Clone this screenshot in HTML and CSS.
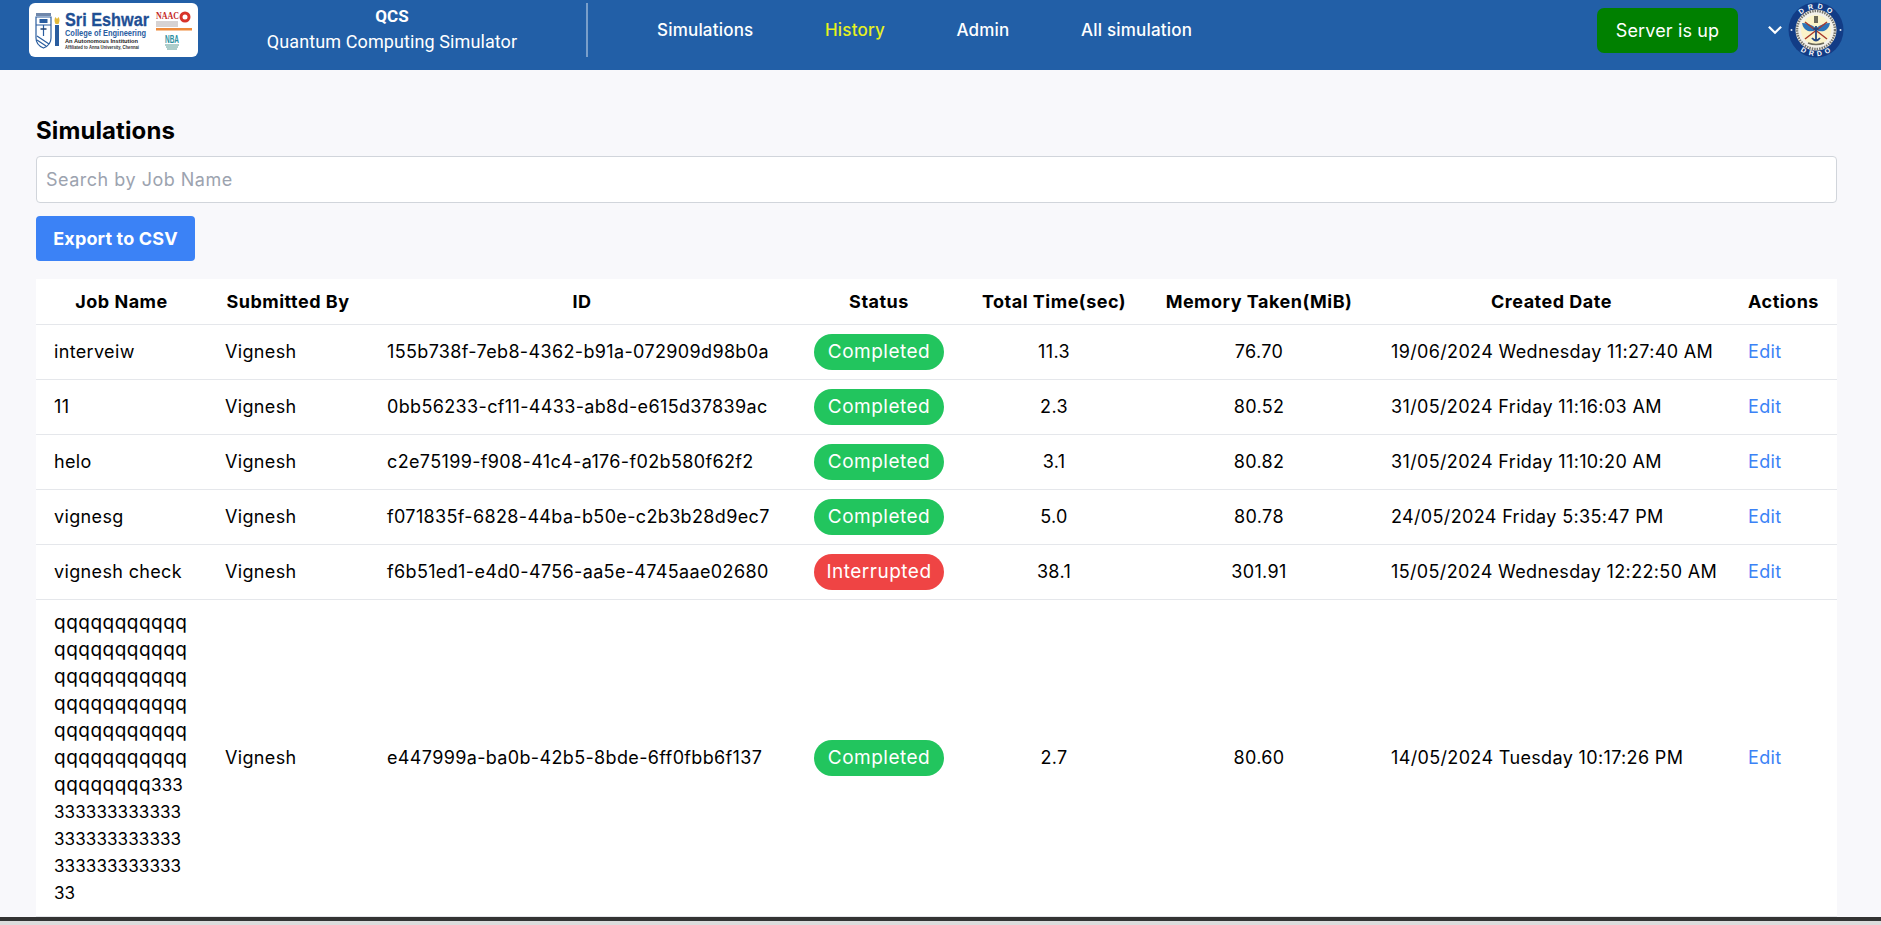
FILE: index.html
```html
<!DOCTYPE html>
<html lang="en">

<head>
    <meta charset="UTF-8">
    <meta name="viewport" content="width=device-width, initial-scale=1.0">
    <title>QCS - Quantum Computing Simulator</title>
    <link rel="stylesheet" href="styles.css">
</head>

<body>
    <header class="topbar">
        <!-- College logo -->
        <svg class="logo" viewBox="0 0 169 54" role="img" aria-label="Sri Eshwar College of Engineering">
            <rect width="169" height="54" rx="6" fill="#fff" />
            <rect x="7" y="10" width="15" height="3" fill="#6f87ab" />
            <path d="M7 14h15v21q0 7-7.500 10q-7.500-3-7.500-10z" fill="#fff" stroke="#2a5d9f" stroke-width="1.200" />
            <path d="M7 22h15M8 33l12 8M8 37l9 6M14.500 22v11" fill="none" stroke="#2a5d9f" stroke-width="1.200" />
            <path d="M10.500 16h8v4h-8z" fill="#2a5d9f" />
            <path d="M11.500 26h6" stroke="#20406f" stroke-width="1.500" />
            <path d="M26.500 14q-2 3 0 7h3q2-4 0-7l-1.500 2z" fill="#e3b93a" />
            <path d="M26 22h4v21h-4z" fill="#2a5d9f" />
            <text class="logo-name" x="36" y="23" textLength="84" lengthAdjust="spacingAndGlyphs">Sri Eshwar</text>
            <text class="logo-college" x="36" y="33" textLength="81" lengthAdjust="spacingAndGlyphs">College of Engineering</text>
            <text class="logo-auto" x="36" y="40" textLength="73" lengthAdjust="spacingAndGlyphs">An Autonomous Institution</text>
            <text class="logo-aff" x="36" y="46" textLength="74" lengthAdjust="spacingAndGlyphs">Affiliated to Anna University, Chennai</text>
            <text class="logo-naac" x="127" y="16" textLength="23" lengthAdjust="spacingAndGlyphs">NAAC</text>
            <circle cx="156" cy="14" r="5.500" fill="#d8342a" />
            <circle cx="156" cy="14" r="2.500" fill="#fff" />
            <path d="M127 19h22M127 21h22M127 23h22" stroke="#9a8f8f" stroke-width=".8" />
            <rect x="127" y="25" width="36" height="2.500" fill="#ee8a3a" />
            <text class="logo-nba" x="136" y="40" textLength="14" lengthAdjust="spacingAndGlyphs">NBA</text>
            <path d="M136 42h14M137 44h12M138 46h10" stroke="#5a9a94" stroke-width="1" />
        </svg>

        <div class="brand">
            <strong>QCS</strong>
            <span>Quantum Computing Simulator</span>
        </div>

        <nav class="menu">
            <a href="#">Simulations</a>
            <a href="#" class="active">History</a>
            <a href="#">Admin</a>
            <a href="#">All simulation</a>
        </nav>

        <button class="server">Server is up</button>

        <svg class="chevron" viewBox="0 0 14 9">
            <path d="M1.500 1.500 7 7l5.500-5.500" fill="none" stroke="#fff" stroke-width="2" />
        </svg>

        <!-- DRDO emblem -->
        <svg class="drdo" viewBox="0 0 56 56" role="img" aria-label="DRDO">
            <defs>
                <path id="arcTop" d="M6.500 28a21.500 21.500 0 0 1 43 0" />
                <path id="arcBottom" d="M2 28a26 26 0 0 0 52 0" />
            </defs>
            <circle cx="28" cy="28" r="27.500" fill="#123c86" />
            <text class="drdo-text"><textPath href="#arcTop" startOffset="50%">D R D O</textPath></text>
            <text class="drdo-text"><textPath href="#arcBottom" startOffset="50%">D R D O</textPath></text>
            <circle cx="3.500" cy="28" r="1" fill="#dfe6f2" />
            <circle cx="52.500" cy="28" r="1" fill="#dfe6f2" />
            <circle cx="28" cy="28" r="20.500" fill="#f3f1ea" />
            <circle cx="28" cy="28" r="19" fill="none" stroke="#77756f" stroke-width="2.500" stroke-dasharray="1.500 1" />
            <circle cx="28" cy="28" r="15" fill="#fbf3c9" />
            <path d="M26 14h4v7h-4z" fill="#6d6a5a" />
            <path d="M28 26Q21 21 14 21q1 6 6 8q4 1 8-1q4 2 8 1q5-2 6-8q-7 0-14 5z" fill="#2d74b8" />
            <path d="M17 37 39 20M39 37 17 20" stroke="#a83a2c" stroke-width="1.500" />
            <path d="M28 24v14M24 36q4 5 8 0M25.500 27h5" fill="none" stroke="#24457f" stroke-width="1.800" />
            <path d="M20 41q8 3 16 0" fill="none" stroke="#6d6a5a" stroke-width="1.500" />
        </svg>
    </header>

    <main class="content">
        <h1>Simulations</h1>
        <input class="search" type="text" placeholder="Search by Job Name">
        <button class="export">Export to CSV</button>

        <table class="jobs">
            <colgroup>
                <col class="col-name">
                <col class="col-user">
                <col class="col-id">
                <col class="col-status">
                <col class="col-time">
                <col class="col-memory">
                <col class="col-date">
                <col class="col-actions">
            </colgroup>
            <thead>
                <tr>
                    <th>Job Name</th>
                    <th>Submitted By</th>
                    <th>ID</th>
                    <th>Status</th>
                    <th>Total Time(sec)</th>
                    <th>Memory Taken(MiB)</th>
                    <th>Created Date</th>
                    <th>Actions</th>
                </tr>
            </thead>
            <tbody>
                <tr>
                    <td>interveiw</td>
                    <td>Vignesh</td>
                    <td>155b738f-7eb8-4362-b91a-072909d98b0a</td>
                    <td class="center"><span class="pill done">Completed</span></td>
                    <td class="center">11.3</td>
                    <td class="center">76.70</td>
                    <td>19/06/2024 Wednesday 11:27:40 AM</td>
                    <td><a href="#">Edit</a></td>
                </tr>
                <tr>
                    <td>11</td>
                    <td>Vignesh</td>
                    <td>0bb56233-cf11-4433-ab8d-e615d37839ac</td>
                    <td class="center"><span class="pill done">Completed</span></td>
                    <td class="center">2.3</td>
                    <td class="center">80.52</td>
                    <td>31/05/2024 Friday 11:16:03 AM</td>
                    <td><a href="#">Edit</a></td>
                </tr>
                <tr>
                    <td>helo</td>
                    <td>Vignesh</td>
                    <td>c2e75199-f908-41c4-a176-f02b580f62f2</td>
                    <td class="center"><span class="pill done">Completed</span></td>
                    <td class="center">3.1</td>
                    <td class="center">80.82</td>
                    <td>31/05/2024 Friday 11:10:20 AM</td>
                    <td><a href="#">Edit</a></td>
                </tr>
                <tr>
                    <td>vignesg</td>
                    <td>Vignesh</td>
                    <td>f071835f-6828-44ba-b50e-c2b3b28d9ec7</td>
                    <td class="center"><span class="pill done">Completed</span></td>
                    <td class="center">5.0</td>
                    <td class="center">80.78</td>
                    <td>24/05/2024 Friday 5:35:47 PM</td>
                    <td><a href="#">Edit</a></td>
                </tr>
                <tr>
                    <td>vignesh check</td>
                    <td>Vignesh</td>
                    <td>f6b51ed1-e4d0-4756-aa5e-4745aae02680</td>
                    <td class="center"><span class="pill fail">Interrupted</span></td>
                    <td class="center">38.1</td>
                    <td class="center">301.91</td>
                    <td>15/05/2024 Wednesday 12:22:50 AM</td>
                    <td><a href="#">Edit</a></td>
                </tr>
                <tr>
                    <td class="long"><span class="long-q">qqqqqqqqqqq<br>qqqqqqqqqqq<br>qqqqqqqqqqq<br>qqqqqqqqqqq<br>qqqqqqqqqqq<br>qqqqqqqqqqq<br>qqqqqqqq</span>333<br>333333333333<br>333333333333<br>333333333333<br>33</td>
                    <td>Vignesh</td>
                    <td>e447999a-ba0b-42b5-8bde-6ff0fbb6f137</td>
                    <td class="center"><span class="pill done">Completed</span></td>
                    <td class="center">2.7</td>
                    <td class="center">80.60</td>
                    <td>14/05/2024 Tuesday 10:17:26 PM</td>
                    <td><a href="#">Edit</a></td>
                </tr>
            </tbody>
        </table>
    </main>

    <div class="window-edge"></div>
</body>

</html>
```

FILE: styles.css
```css
/* General styles */
* {
    box-sizing: border-box;
}

body {
    font-family: Inter, "Open Sans", sans-serif;
    font-size: 18px;
    letter-spacing: 0.35px;
    background-color: #f8f8fb;
    color: #000;
    margin: 0;
    height: 100vh;
    display: flex;
    flex-direction: column;
    overflow: hidden;
}

/* Top bar */
.topbar {
    flex: none;
    height: 70px;
    background-color: #225fa7;
    color: #fff;
    display: flex;
    align-items: center;
    padding: 0 0 10px 29px;
}

.logo {
    flex: none;
    width: 169px;
    height: 54px;
    letter-spacing: 0;
}

.logo text {
    font-family: "Liberation Sans", sans-serif;
}

.logo .logo-name {
    font-size: 18px;
    font-weight: 700;
    fill: #1f4f94;
    stroke: #1f4f94;
    stroke-width: 0.3px;
}

.logo .logo-college {
    font-size: 8.500px;
    font-weight: 700;
    fill: #2a5d9f;
}

.logo .logo-auto {
    font-size: 5.500px;
    font-weight: 700;
    fill: #222;
}

.logo .logo-aff {
    font-size: 4.500px;
    font-weight: 700;
    fill: #333;
}

.logo .logo-naac {
    font-family: "Liberation Serif", serif;
    font-size: 10px;
    font-weight: 700;
    fill: #c5281f;
}

.logo .logo-nba {
    font-size: 10px;
    font-weight: 700;
    fill: #2f8f9f;
}

.brand {
    flex: none;
    width: 390px;
    height: 54px;
    padding-top: 5px;
    border-right: 2px solid rgba(255, 255, 255, 0.4);
    display: flex;
    flex-direction: column;
    align-items: center;
    gap: 6px;
    font-family: Roboto, sans-serif;
    font-size: 18px;
    letter-spacing: 0.1px;
    line-height: 21px;
}

.brand strong {
    font-weight: 700;
    font-size: 17px;
    line-height: 17px;
}

.menu {
    flex: none;
    display: flex;
    gap: 71.500px;
    margin-left: 69px;
    font-size: 17px;
    letter-spacing: 0.2px;
}

.menu a {
    color: #fff;
    font-weight: 500;
    text-decoration: none;
}

.menu a.active {
    color: #e6f01f;
}

.server {
    flex: none;
    width: 141px;
    height: 45px;
    margin-left: auto;
    background-color: #008000;
    color: #fff;
    border: none;
    border-radius: 7px;
    font-family: inherit;
    font-size: 18px;
    letter-spacing: 0.15px;
}

.chevron {
    flex: none;
    width: 16px;
    height: 10px;
    margin-left: 29px;
}

.drdo {
    flex: none;
    width: 56px;
    height: 56px;
    margin: 0 37px 0 5px;
    letter-spacing: 0;
}

.drdo-text {
    font-family: "Liberation Sans", sans-serif;
    font-size: 7px;
    font-weight: 700;
    fill: #fff;
    text-anchor: middle;
    letter-spacing: 1px;
}

/* Page content */
.content {
    flex: 1;
    min-height: 0;
    padding: 46px 44px 0 36px;
    display: flex;
    flex-direction: column;
    align-items: flex-start;
}

h1 {
    flex: none;
    font-size: 24px;
    line-height: 30px;
    font-weight: 700;
    letter-spacing: 0.1px;
    margin: 0 0 10px;
}

.search {
    display: block;
    flex: none;
    width: 100%;
    height: 47px;
    padding: 0 9px;
    background-color: #fff;
    border: 1px solid #d1d5db;
    border-radius: 4px;
    font-family: inherit;
    font-size: 18px;
    letter-spacing: 0.5px;
}

.search::placeholder {
    color: #9ca3af;
}

.export {
    flex: none;
    height: 45px;
    width: 159px;
    margin: 13px 0 18px;
    background-color: #3b82f6;
    color: #fff;
    border: none;
    border-radius: 4px;
    font-family: inherit;
    font-size: 18px;
    font-weight: 700;
    letter-spacing: 0.15px;
}

/* Table */
.jobs {
    width: 100%;
    flex: none;
    border-collapse: collapse;
    table-layout: fixed;
    background-color: #fff;
}

.col-name { width: 171px; }
.col-user { width: 162px; }
.col-id { width: 426px; }
.col-status { width: 168px; }
.col-time { width: 182px; }
.col-memory { width: 228px; }
.col-date { width: 357px; }
.col-actions { width: 107px; }

.jobs th {
    height: 45px;
    padding: 0 10px;
    font-weight: 700;
    letter-spacing: 0.5px;
    text-align: center;
    white-space: nowrap;
    border-bottom: 1px solid #e5e7eb;
}

.jobs td {
    height: 55px;
    padding: 0 18px;
    white-space: nowrap;
    border-bottom: 1px solid #e5e7eb;
}

.jobs td.center {
    text-align: center;
}

.jobs td.long {
    padding: 10px 18px 9px;
    font-size: 17px;
    letter-spacing: 0.1px;
    line-height: 27px;
}

.long-q {
    font-size: 19px;
    letter-spacing: 0.5px;
    line-height: 1;
}

.jobs a {
    color: #3b82f6;
    text-decoration: none;
}

.pill {
    display: inline-block;
    width: 130px;
    height: 36px;
    line-height: 36px;
    border-radius: 18px;
    color: #fff;
    font-size: 19px;
    letter-spacing: 0.5px;
    text-align: center;
    vertical-align: middle;
}

.pill.done {
    background-color: #22c55e;
}

.pill.fail {
    background-color: #ef4444;
}

/* Browser window edge at the bottom */
.window-edge {
    flex: none;
    height: 8px;
    background-color: #dcdcdc;
    border-top: 4px solid #333;
}
```
